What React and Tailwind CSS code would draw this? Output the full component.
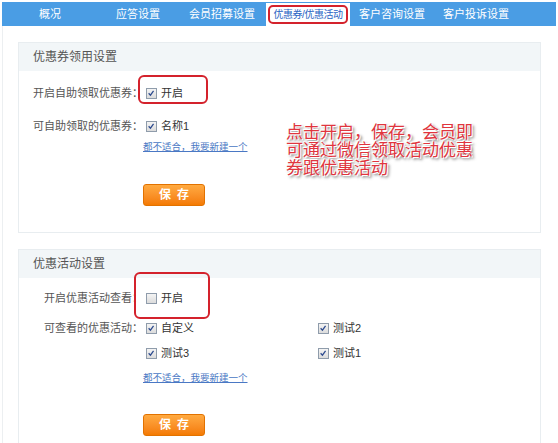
import React from "react";

const FONT = { fontFamily: '"Liberation Sans", "Noto Sans CJK SC", sans-serif' };

const TABS = [
  { label: "概况", w: "w-[96px]" },
  { label: "应答设置", w: "w-[80px]" },
  { label: "会员招募设置", w: "w-[88px]" },
  { label: "优惠券/优惠活动", w: "w-[84px]", active: true },
  { label: "客户咨询设置", w: "w-[84px]" },
  { label: "客户投诉设置", w: "w-[84px]" },
];

function Checkbox({ checked, label }) {
  return (
    <span className="flex items-center">
      <span className="relative inline-block w-[11px] h-[11px] border border-[#8f9cab] bg-gradient-to-b from-[#f4f4f4] to-[#dcdcdc]">
        {checked && (
          <svg viewBox="0 0 11 11" className="absolute left-0 top-0 w-[9px] h-[9px]">
            <path d="M2 5.2 L4.2 7.6 L8 2.2" fill="none" stroke="#2c4a8e" strokeWidth="1.5" />
          </svg>
        )}
      </span>
      <span className="ml-[4px] text-[11px] text-[#333]">{label}</span>
    </span>
  );
}

function Label({ children }) {
  return <span className="w-[124px] shrink-0 text-right text-[11px] text-[#555]">{children}</span>;
}

function SaveButton() {
  return (
    <button className="w-[62px] h-[22px] rounded-[3px] border border-[#e27200] bg-gradient-to-b from-[#ffaa40] to-[#f47a00] text-white text-[12px] font-bold tracking-[6px] pl-[6px]">
      保存
    </button>
  );
}

function CreateLink() {
  return (
    <div className="ml-[124px] h-[14px] flex items-center text-[9.5px] text-[#4a78c4] underline">
      都不适合，我要新建一个
    </div>
  );
}

function Panel({ title, children }) {
  return (
    <div className="relative ml-[15px] w-[523px] border border-[#e8edf0] bg-white">
      <div className="h-[28px] bg-[#f2f6f8] flex items-center pl-[14px] text-[12px] text-[#555]">{title}</div>
      {children}
    </div>
  );
}

export default function App() {
  return (
    <div className="w-[558px] h-[443px] overflow-hidden bg-white pt-[2px] px-[2px]" style={FONT}>
      <div className="h-[24px] bg-[#4a9de4] flex">
        {TABS.map((t) => (
          <div
            key={t.label}
            className={`${t.w} h-full flex items-center justify-center whitespace-nowrap ${
              t.active ? "bg-white mt-[1px] text-[#2b64c4] text-[10px]" : "text-white text-[11px]"
            }`}
          >
            {t.active ? (
              <span className="border-2 border-[#d4222c] rounded-[5px] h-[19px] w-[80px] flex items-center justify-center tracking-[-0.5px] -mt-[1px]">
                {t.label}
              </span>
            ) : (
              t.label
            )}
          </div>
        ))}
      </div>

      <div className="border-l border-[#eceff1] pt-[16px] h-full">
        <Panel title="优惠券领用设置">
          <div className="pt-[12px] pb-[26px]">
            <div className="h-[20px] flex items-center">
              <Label>开启自助领取优惠券：</Label>
              <span className="ml-[3px]">
                <Checkbox checked label="开启" />
              </span>
            </div>
            <div className="h-[20px] mt-[13px] flex items-center">
              <Label>可自助领取的优惠券：</Label>
              <span className="ml-[3px]">
                <Checkbox checked label="名称1" />
              </span>
            </div>
            <div className="mt-[4px]">
              <CreateLink />
            </div>
            <div className="ml-[124px] mt-[28px]">
              <SaveButton />
            </div>
          </div>

          <div className="absolute left-[119px] top-[32px] w-[70px] h-[29px] border-2 border-[#d4222c] rounded-[6px]" />

          <div className="absolute left-[267px] top-[81px] text-[17px] leading-[18px] text-[#e0353e] [text-shadow:1px_1px_0_#fff,-1px_-1px_0_#fff,2px_2px_3px_#555]">
            <div>点击开启，保存，会员即</div>
            <div>可通过微信领取活动优惠</div>
            <div>券跟优惠活动</div>
          </div>
        </Panel>

        <div className="mt-[16px]">
          <Panel title="优惠活动设置">
            <div className="pt-[10px] pb-[30px]">
              <div className="h-[20px] flex items-center">
                <Label>开启优惠活动查看：</Label>
                <span className="ml-[3px]">
                  <Checkbox label="开启" />
                </span>
              </div>
              <div className="mt-[10px] flex">
                <Label>
                  <span className="h-[20px] flex items-center justify-end">可查看的优惠活动：</span>
                </Label>
                <div className="ml-[3px] grid grid-cols-[172px_auto] gap-y-[5px]">
                  {["自定义", "测试2", "测试3", "测试1"].map((n) => (
                    <div key={n} className="h-[20px] flex items-center">
                      <Checkbox checked label={n} />
                    </div>
                  ))}
                </div>
              </div>
              <div className="mt-[8px]">
                <CreateLink />
              </div>
              <div className="ml-[124px] mt-[27px]">
                <SaveButton />
              </div>
            </div>

            <div className="absolute left-[115px] top-[22px] w-[76px] h-[47px] border-2 border-[#d4222c] rounded-[6px]" />
          </Panel>
        </div>
      </div>
    </div>
  );
}
